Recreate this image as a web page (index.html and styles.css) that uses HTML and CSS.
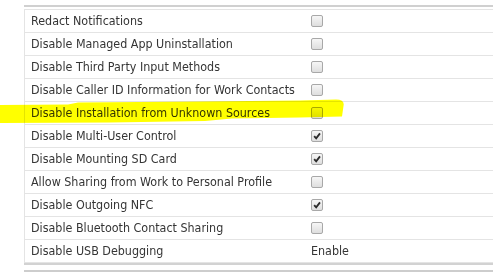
FILE: index.html
```html
<!DOCTYPE html>
<html lang="en">

<head>
    <meta charset="UTF-8">
    <title>Restrictions</title>
    <link rel="stylesheet" href="styles.css">
</head>

<body>
    <div class="panel">
        <div class="settings">
            <div class="row">
                <span class="name">Redact Notifications</span>
                <span class="value"><span class="check"></span></span>
            </div>
            <div class="row">
                <span class="name">Disable Managed App Uninstallation</span>
                <span class="value"><span class="check"></span></span>
            </div>
            <div class="row">
                <span class="name">Disable Third Party Input Methods</span>
                <span class="value"><span class="check"></span></span>
            </div>
            <div class="row">
                <span class="name">Disable Caller ID Information for Work Contacts</span>
                <span class="value"><span class="check"></span></span>
            </div>
            <div class="row">
                <span class="name">Disable Installation from Unknown Sources</span>
                <span class="value"><span class="check"></span></span>
            </div>
            <div class="row">
                <span class="name">Disable Multi-User Control</span>
                <span class="value"><span class="check checked"><svg viewBox="0 0 12 12"><path d="M2.6 6.2 L5 8.8 L9.6 2.8" /></svg></span></span>
            </div>
            <div class="row">
                <span class="name">Disable Mounting SD Card</span>
                <span class="value"><span class="check checked"><svg viewBox="0 0 12 12"><path d="M2.6 6.2 L5 8.8 L9.6 2.8" /></svg></span></span>
            </div>
            <div class="row">
                <span class="name">Allow Sharing from Work to Personal Profile</span>
                <span class="value"><span class="check"></span></span>
            </div>
            <div class="row">
                <span class="name">Disable Outgoing NFC</span>
                <span class="value"><span class="check checked"><svg viewBox="0 0 12 12"><path d="M2.6 6.2 L5 8.8 L9.6 2.8" /></svg></span></span>
            </div>
            <div class="row">
                <span class="name">Disable Bluetooth Contact Sharing</span>
                <span class="value"><span class="check"></span></span>
            </div>
            <div class="row">
                <span class="name">Disable USB Debugging</span>
                <span class="value">Enable</span>
            </div>
        </div>
        <div class="footer"></div>
    </div>

    <!-- marker highlight drawn over the page -->
    <svg class="marker" viewBox="0 0 493 274" width="493" height="274">
        <path d="M0 105 L68 104.5 L78 102.5 L200 101.5 L300 100.5 L336 99.5 Q345 99.5 343.5 106 L342 116.5 L300 117.5 L232 118.5 L205 121 L110 122.5 L0 123 Z" />
    </svg>
</body>

</html>
```

FILE: styles.css
```css
* {
    box-sizing: border-box;
}

html,
body {
    margin: 0;
    width: 493px;
    height: 274px;
    overflow: hidden;
    background: #fff;
}

body {
    font-family: "DejaVu Sans Condensed", "DejaVu Sans", Tahoma, sans-serif;
    font-size: 12.4px;
    color: #353535;
    position: relative;
}

.panel {
    margin: 5px 0 0 24px;
    border-top: 2px solid #d0d0d0;
    padding-top: 2px;
}

.settings {
    border-top: 1px solid #e4e4e4;
    border-left: 1px solid #e4e4e4;
}

.row {
    display: flex;
    height: 23px;
    border-bottom: 1px solid #e4e4e4;
    line-height: 22px;
}

.name {
    width: 280px;
    padding-left: 6px;
    white-space: nowrap;
}

.value {
    display: flex;
    align-items: center;
    padding-left: 6px;
}

.check {
    display: flex;
    align-items: center;
    justify-content: center;
    width: 12px;
    height: 12px;
    border: 1px solid #a8a8a8;
    border-radius: 2px;
    background: linear-gradient(#f6f6f6, #dedede);
}

.check svg {
    width: 10px;
    height: 10px;
}

.check svg path {
    fill: none;
    stroke: #2b2b2b;
    stroke-width: 2.2;
}

.footer {
    height: 9px;
    border-top: 2px solid #d2d2d2;
    border-bottom: 2px solid #cdcdcd;
}

.marker {
    position: absolute;
    left: 0;
    top: 0;
    mix-blend-mode: multiply;
}

.marker path {
    fill: #ffff00;
}
```
